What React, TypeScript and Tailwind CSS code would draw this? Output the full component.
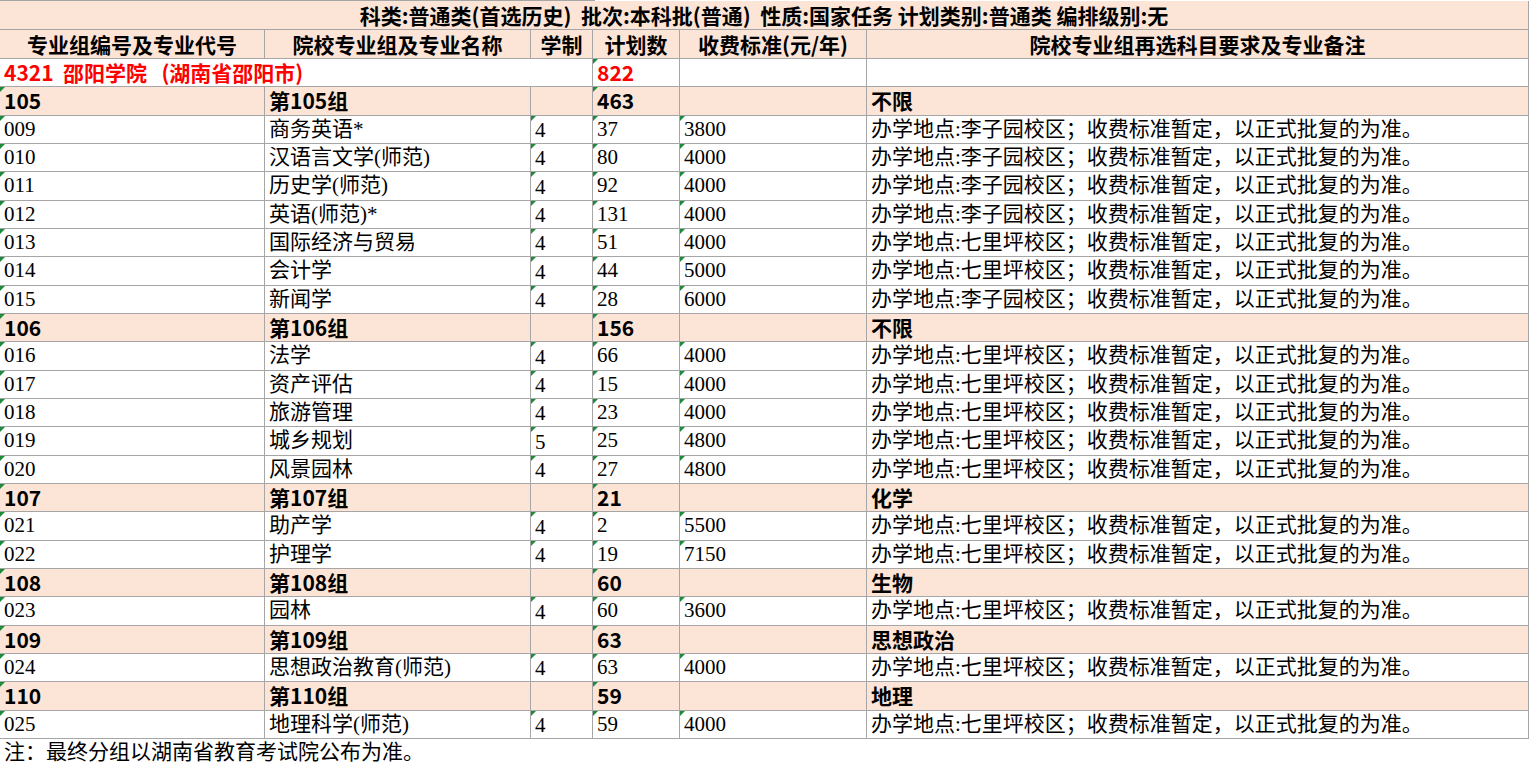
const F = 'font-[Liberation_Serif,Noto_Sans_CJK_SC,serif] text-[21px]';
const B = 'font-[Noto_Sans_CJK_SC,sans-serif] font-bold text-[21px]';

type Row = { kind: 'g' | 'd'; a: string; b: string; c?: string; d: string; e?: string; f: string };

const note = '办学地点:李子园校区；收费标准暂定，以正式批复的为准。';
const note7 = '办学地点:七里坪校区；收费标准暂定，以正式批复的为准。';

const rows: Row[] = [
  { kind: 'g', a: '105', b: '第105组', d: '463', f: '不限' },
  { kind: 'd', a: '009', b: '商务英语*', c: '4', d: '37', e: '3800', f: note },
  { kind: 'd', a: '010', b: '汉语言文学(师范)', c: '4', d: '80', e: '4000', f: note },
  { kind: 'd', a: '011', b: '历史学(师范)', c: '4', d: '92', e: '4000', f: note },
  { kind: 'd', a: '012', b: '英语(师范)*', c: '4', d: '131', e: '4000', f: note },
  { kind: 'd', a: '013', b: '国际经济与贸易', c: '4', d: '51', e: '4000', f: note7 },
  { kind: 'd', a: '014', b: '会计学', c: '4', d: '44', e: '5000', f: note7 },
  { kind: 'd', a: '015', b: '新闻学', c: '4', d: '28', e: '6000', f: note },
  { kind: 'g', a: '106', b: '第106组', d: '156', f: '不限' },
  { kind: 'd', a: '016', b: '法学', c: '4', d: '66', e: '4000', f: note7 },
  { kind: 'd', a: '017', b: '资产评估', c: '4', d: '15', e: '4000', f: note7 },
  { kind: 'd', a: '018', b: '旅游管理', c: '4', d: '23', e: '4000', f: note7 },
  { kind: 'd', a: '019', b: '城乡规划', c: '5', d: '25', e: '4800', f: note7 },
  { kind: 'd', a: '020', b: '风景园林', c: '4', d: '27', e: '4800', f: note7 },
  { kind: 'g', a: '107', b: '第107组', d: '21', f: '化学' },
  { kind: 'd', a: '021', b: '助产学', c: '4', d: '2', e: '5500', f: note7 },
  { kind: 'd', a: '022', b: '护理学', c: '4', d: '19', e: '7150', f: note7 },
  { kind: 'g', a: '108', b: '第108组', d: '60', f: '生物' },
  { kind: 'd', a: '023', b: '园林', c: '4', d: '60', e: '3600', f: note7 },
  { kind: 'g', a: '109', b: '第109组', d: '63', f: '思想政治' },
  { kind: 'd', a: '024', b: '思想政治教育(师范)', c: '4', d: '63', e: '4000', f: note7 },
  { kind: 'g', a: '110', b: '第110组', d: '59', f: '地理' },
  { kind: 'd', a: '025', b: '地理科学(师范)', c: '4', d: '59', e: '4000', f: note7 },
];

const cols = 'grid grid-cols-[265px_266px_62px_87px_187px_662px]';
const cell = 'relative border-r border-b border-[#a6a6a6] px-[4px] flex items-center whitespace-nowrap overflow-hidden leading-none';

function Tri() {
  return <span className="absolute left-0 top-0 w-0 h-0 border-t-[5px] border-r-[5px] border-t-[#1e8a3c] border-r-transparent" />;
}

export default function App() {
  return (
    <div className="w-[1529px] h-[766px] bg-white overflow-hidden text-black">
      <div className="border-t border-[#a6a6a6] w-[595px]" />
      <div className={`h-[29px] bg-[#fce4d6] border-b border-r border-[#a6a6a6] flex items-center justify-center leading-none ${B}`}>
        科类:普通类(首选历史)&nbsp; 批次:本科批(普通)&nbsp; 性质:国家任务 计划类别:普通类 编排级别:无
      </div>
      <div className={`${cols} h-[29px] bg-[#fce4d6] ${B}`}>
        {['专业组编号及专业代号', '院校专业组及专业名称', '学制', '计划数', '收费标准(元/年)', '院校专业组再选科目要求及专业备注'].map((h) => (
          <div key={h} className={`${cell} justify-center`}>{h}</div>
        ))}
      </div>
      <div className={`${cols} h-[28.33px] text-[#ff0000] ${B}`}>
        <div className={`${cell} col-span-3`}>4321&nbsp; 邵阳学院&nbsp;&nbsp; (湖南省邵阳市)</div>
        <div className={cell}><Tri />822</div>
        <div className={cell} />
        <div className={cell} />
      </div>
      {rows.map((r, i) =>
        r.kind === 'g' ? (
          <div key={i} className={`${cols} h-[28.33px] bg-[#fce4d6] ${B}`}>
            <div className={cell}><Tri />{r.a}</div>
            <div className={cell}>{r.b}</div>
            <div className={cell} />
            <div className={cell}><Tri />{r.d}</div>
            <div className={cell} />
            <div className={cell}>{r.f}</div>
          </div>
        ) : (
          <div key={i} className={`${cols} h-[28.33px] ${F}`}>
            <div className={cell}><Tri />{r.a}</div>
            <div className={cell}>{r.b}</div>
            <div className={`${cell} items-end pb-[2px]`}><Tri />{r.c}</div>
            <div className={cell}><Tri />{r.d}</div>
            <div className={cell}><Tri />{r.e}</div>
            <div className={cell}>{r.f}</div>
          </div>
        )
      )}
      <div className={`h-[27px] px-[4px] flex items-center leading-none ${F}`}>注：最终分组以湖南省教育考试院公布为准。</div>
    </div>
  );
}
